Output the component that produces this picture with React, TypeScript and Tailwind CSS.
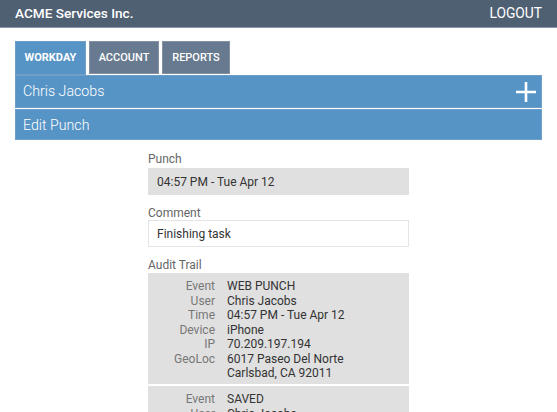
const rows = [
  { label: "Event", value: "WEB PUNCH" },
  { label: "User", value: "Chris Jacobs" },
  { label: "Time", value: "04:57 PM - Tue Apr 12" },
  { label: "Device", value: "iPhone" },
  { label: "IP", value: "70.209.197.194" },
  { label: "GeoLoc", value: "6017 Paseo Del Norte" },
  { label: "", value: "Carlsbad, CA 92011" },
];

const savedRows = [
  { label: "Event", value: "SAVED" },
  { label: "User", value: "Chris Jacobs" },
];

const AuditBlock = ({ items, className }: { items: { label: string; value: string }[]; className: string }) => (
  <div className={`bg-[#e0e0e0] pt-[6px] ${className}`}>
    {items.map((r, i) => (
      <div key={i} className="flex h-[14.5px] items-center text-[12px] leading-[14.5px]">
        <div className="w-[67px] text-right text-[#777]">{r.label}</div>
        <div className="ml-[12px] text-[#333]">{r.value}</div>
      </div>
    ))}
  </div>
);

export default function App() {
  return (
    <div className="h-[412px] w-[557px] overflow-hidden bg-white font-['Roboto',sans-serif]">
      <header className="flex h-[28px] items-center justify-between border-b border-[#8a96a3] bg-[#4f6073] px-[15px] text-white">
        <span className="text-[13.6px] font-medium">ACME Services Inc.</span>
        <span className="text-[13.8px]">LOGOUT</span>
      </header>

      <div className="mx-[15px] w-[527px]">
        <nav className="mt-[13px] flex h-[34px] items-stretch gap-[3px]">
          <div className="flex w-[71px] items-center justify-center border border-[#6f9fc8] bg-[#5794c6] pt-[1px] text-[11px] font-bold text-white">
            WORKDAY
          </div>
          <div className="flex h-[33px] w-[70px] items-center justify-center border border-[#8493a3] bg-[#677a8f] pt-[1px] text-[11px] font-medium text-white">
            ACCOUNT
          </div>
          <div className="flex h-[33px] w-[68px] items-center justify-center border border-[#8493a3] bg-[#677a8f] pt-[1px] text-[11px] font-medium text-white">
            REPORTS
          </div>
        </nav>

        <div className="flex h-[33px] items-center justify-between border border-[#6f9fc8] bg-[#5794c6] pl-[7px] pr-[5px] text-[14.2px] font-light text-white">
          <span className="pt-[1px]">Chris Jacobs</span>
          <svg width="20" height="20" viewBox="0 0 20 20" className="block">
            <path d="M10 0v20M0 10h20" stroke="#fff" strokeWidth="2.6" fill="none" />
          </svg>
        </div>
        <div className="mt-[1px] flex h-[31px] items-center border border-[#6f9fc8] bg-[#5794c6] pl-[7px] pt-[2px] text-[14.2px] font-light text-white">
          Edit Punch
        </div>

        <main className="ml-[133px] w-[261px] pt-[12px]">
          <div className="h-[15px] text-[12px] leading-[15px] text-[#666]">Punch</div>
          <div className="mt-[1px] flex h-[27px] items-center bg-[#e0e0e0] pl-[9px] text-[12px] text-[#333]">
            04:57 PM - Tue Apr 12
          </div>
          <div className="mt-[11px] h-[14px] text-[12px] leading-[15px] text-[#666]">Comment</div>
          <div className="flex h-[27px] items-center border border-[#e4e4e4] bg-white pl-[8px] text-[12px] text-[#333]">
            Finishing task
          </div>
          <div className="mt-[11px] h-[15px] text-[12px] leading-[15px] text-[#666]">Audit Trail</div>
          <AuditBlock items={rows} className="h-[111px]" />
          <AuditBlock items={savedRows} className="mt-[2px] h-[40px]" />
        </main>
      </div>
    </div>
  );
}
